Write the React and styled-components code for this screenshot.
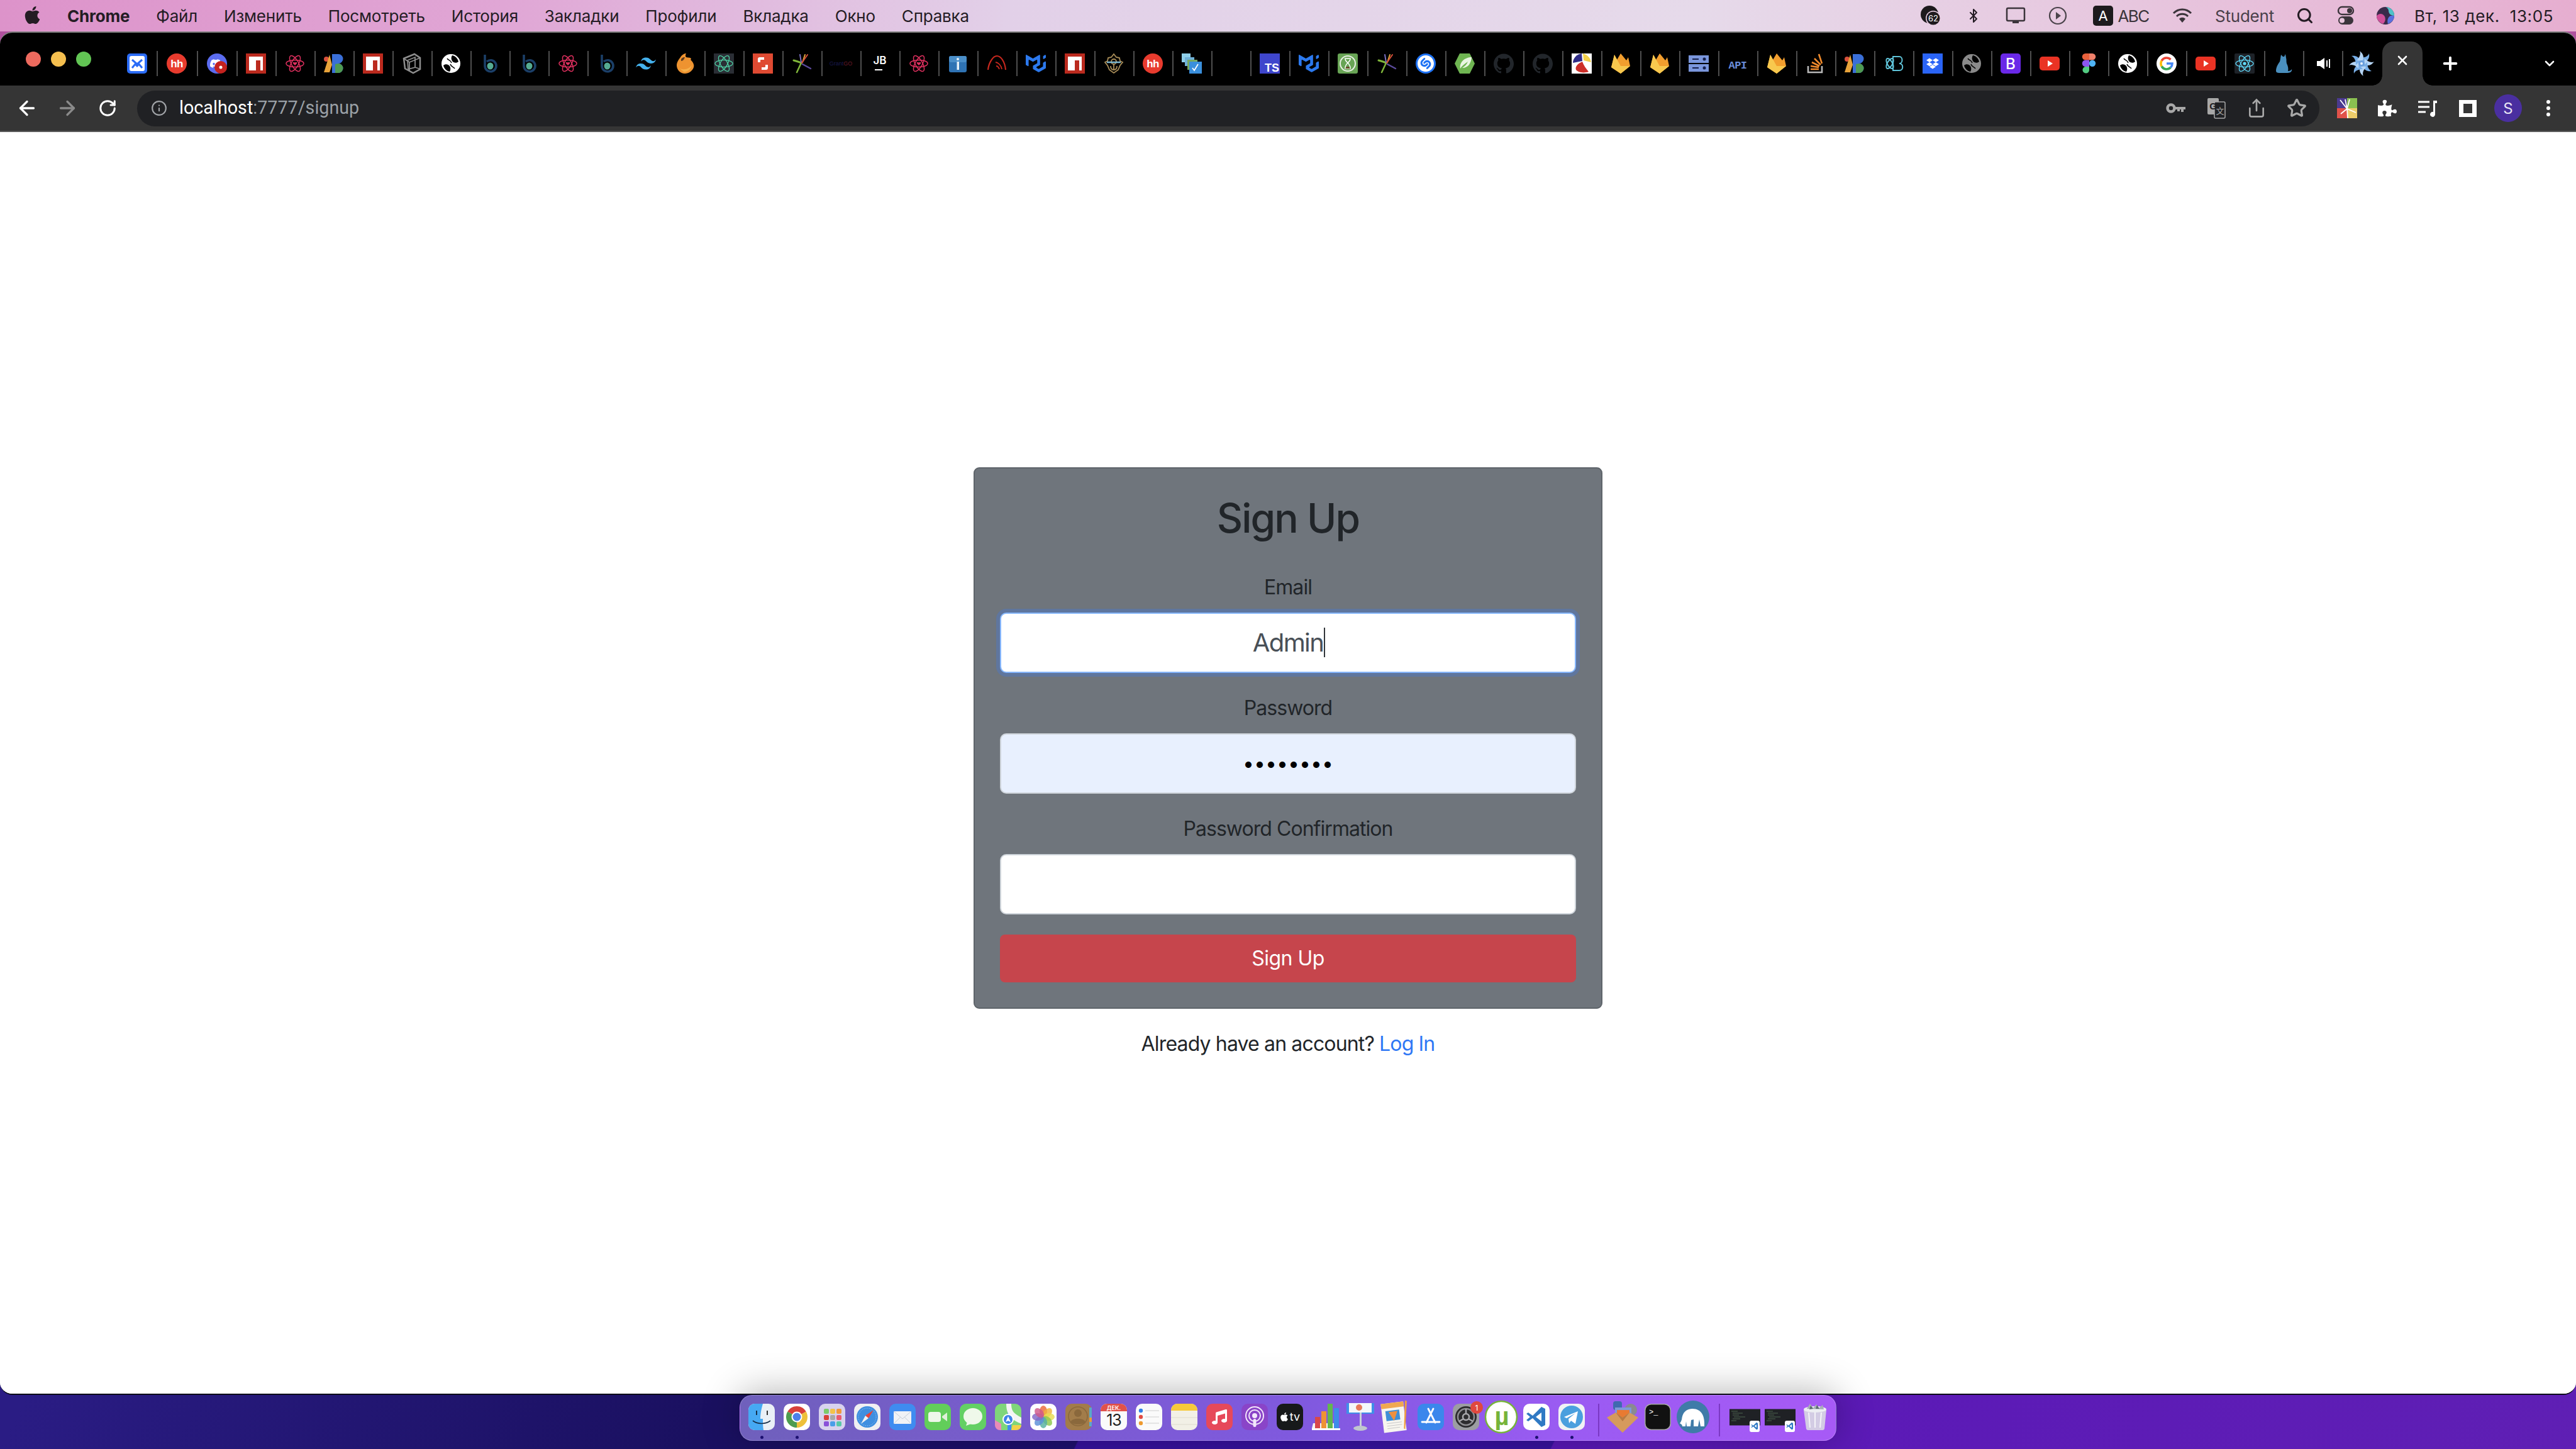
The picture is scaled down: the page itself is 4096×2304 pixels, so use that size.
import React from "react";
import styled, { createGlobalStyle } from "styled-components";
import { ArrowLeft, ArrowRight, RotateCw, Info, Star, Share, X, Plus, ChevronDown, Search, Bluetooth } from "lucide-react";
import { FaApple, FaPuzzlePiece, FaMusic } from "react-icons/fa";
import { SiDiscord, SiTailwindcss, SiMui, SiShazam, SiGithub, SiDropbox } from "react-icons/si";

const SANS = `Inter, "Liberation Sans", "Noto Sans", sans-serif`;

const Global = createGlobalStyle`
  html, body { margin: 0; padding: 0; background: #000; }
  * { box-sizing: border-box; }
  body { font-family: ${SANS}; }
`;

const Desktop = styled.div`
  width: 4096px; height: 2304px; display: flex; flex-direction: column; overflow: hidden;
  background-color: #1c1268;
  background-image:
    linear-gradient(90deg, #b0509e 0, #b0509e 100%),
    linear-gradient(116deg, #2a1c84 1009px, #1a1060 2000px, #1e1070 2544px, #36129e 2546px, #37139f 3225px, #5a18b8 3227px, #5f1fb4 100%);
  background-size: 100% 90px, 100% 100%;
  background-repeat: no-repeat;
`;

/* ---------- menu bar ---------- */
const MenuBar = styled.header`
  height: 50px; flex: none; display: flex; align-items: center; color: #241c24; font-size: 26px;
  padding: 0 36px 0 36px;
  background: linear-gradient(90deg, #dd93ca 0, #e0a6d5 800px, #e2d0e8 1600px, #e6daea 2700px, #e7c6de 3400px, #e6aed0 4096px);
`;
const AppleMark = styled(FaApple)` width: 31px; height: 32px; color: #241c24; margin-right: 40px; margin-top: -3px; flex: none; `;
const MenuItems = styled.nav` display: flex; gap: 42px; flex: 1; `;
const MenuItem = styled.span`
  font-weight: ${p => (p.$bold ? 700 : 400)}; white-space: nowrap; letter-spacing: -0.2px;
`;
const Status = styled.div` display: flex; align-items: center; justify-content: flex-end; `;
const StatusCell = styled.span`
  display: flex; align-items: center; justify-content: center; flex: none; white-space: nowrap;
  width: ${p => p.$w}px; margin-left: ${p => p.$ml || 0}px; color: ${p => p.$c || "#241c24"};
  letter-spacing: ${p => p.$ls || 0}px;
`;

/* ---------- browser window ---------- */
const Window = styled.main`
  flex: 1; display: flex; flex-direction: column; border-radius: 20px; overflow: hidden; min-height: 0;
  border-top: 2px solid #7f7f7f; border-bottom: 2px solid #0c0c18; background: #fff;
`;
const TabStrip = styled.div` height: 84px; flex: none; display: flex; background: #000; `;
const Lights = styled.div` width: 188px; flex: none; display: flex; align-items: center; gap: 16px; padding-left: 41px; `;
const Light = styled.i` width: 24px; height: 24px; border-radius: 50%; background: ${p => p.$c}; `;
const Tab = styled.div`
  width: ${p => p.$w}px; flex: none; height: 40px; align-self: center; margin-top: 14px; display: flex; align-items: center;
  justify-content: center; padding-right: 2px; border-right: 2px solid ${p => (p.$last ? "transparent" : "#4e4e4e")};
`;
const FavSvg = styled.svg` width: 32px; height: 32px; display: block; overflow: visible; `;
const ActiveTab = styled.div`
  width: 64px; height: 70px; align-self: flex-end; flex: none; background: #353535; position: relative;
  border-radius: 18px 18px 0 0; display: flex; align-items: center; justify-content: center; padding-bottom: 10px; color: #fff;
  &::before, &::after { content: ""; position: absolute; bottom: 0; width: 16px; height: 16px; }
  &::before { left: -16px; background: radial-gradient(circle at 0 0, #000 15.5px, #353535 16px); }
  &::after { right: -16px; background: radial-gradient(circle at 100% 0, #000 15.5px, #353535 16px); }
`;
const NewTab = styled.div` color: #fff; margin: 14px 0 0 28px; width: 32px; align-self: center; display: flex; justify-content: center; `;
const TabMenu = styled.div` color: #fff; margin: 14px 30px 0 auto; width: 24px; align-self: center; display: flex; justify-content: center; `;

const Toolbar = styled.div`
  height: 74px; flex: none; display: flex; align-items: center; background: #353535; padding: 0 12px 0 11px;
  border-bottom: 2px solid #5c5c5c;
`;
const ToolButton = styled.span`
  width: 64px; height: 56px; flex: none; display: flex; align-items: center; justify-content: center; color: ${p => p.$c || "#fff"};
`;
const AddressBar = styled.div`
  flex: 1; height: 57px; margin: 0 12px 0 15px; padding: 0 4px 0 22px; border-radius: 29px; background: #202124;
  display: flex; align-items: center; min-width: 0;
`;
const InfoIcon = styled(Info)` color: #a0a3a7; margin-right: 19px; flex: none; `;
const Url = styled.div` flex: 1; font-family: Roboto, ${SANS}; font-size: 28.7px; color: #fff; white-space: nowrap; margin-top: -2px; `;
const UrlRest = styled.span` color: #9aa0a6; `;
const Avatar = styled.span`
  width: 44px; height: 44px; border-radius: 50%; background: #4a2fa0; color: #e9e6f5; font-size: 24px;
  display: flex; align-items: center; justify-content: center;
`;

/* ---------- page ---------- */
const Page = styled.section`
  flex: 1; background: #fff; display: flex; flex-direction: column; align-items: center; justify-content: center;
  font-size: 32px; line-height: 48px; color: #212529;
`;
const Card = styled.form`
  width: 1000px; padding: 40px; background: #6f757c; border: 2px solid #5e646a; border-radius: 9px;
  display: flex; flex-direction: column; text-align: center;
`;
const Title = styled.h2`
  margin: 0 0 48px; font-size: 64px; line-height: 77px; font-weight: 500; letter-spacing: -1.9px; color: #212529;
`;
const Group = styled.div` margin-bottom: 32px; display: flex; flex-direction: column; `;
const Label = styled.label` display: block; margin-bottom: 16px; letter-spacing: -0.95px; color: #212529; `;
const Input = styled.input`
  display: block; width: 100%; height: 96px; border: 2px solid #ced4da; border-radius: 10px; outline: none;
  background: ${p => p.$fill || "#fff"}; color: #000; text-align: center; font: 400 32px ${SANS}; padding: 0 32px;
`;
const FocusedField = styled.div`
  height: 96px; border: 2px solid #86b7fe; border-radius: 10px; background: #fff; box-shadow: 0 0 0 6px #5f769e;
  display: flex; align-items: center; justify-content: center; color: #495057; font-size: 40px; letter-spacing: -1.6px;
`;
const Caret = styled.i` width: 2px; height: 47px; background: #33373b; margin-left: 1px; margin-right: -3px; `;
const Submit = styled.button`
  height: 76px; width: 100%; border: none; border-radius: 8px; background: #c6454c; color: #fff;
  font: 400 32px ${SANS}; letter-spacing: -0.55px;
`;
const Foot = styled.p` margin: 32px 0 0; letter-spacing: -0.85px; color: #212529; `;
const FootLink = styled.a` color: #2f78f5; text-decoration: none; `;

/* ---------- dock ---------- */
const DockRow = styled.footer` height: 86px; flex: none; display: flex; justify-content: center; position: relative; `;
const Dock = styled.nav`
  width: 1744px; height: 73px; padding: 13px 13px 0; display: flex; gap: 14px; border-radius: 20px;
  background: linear-gradient(90deg, #6f60bc 0, #7a5bd0 500px, #8059df 900px, #9a5bf2 1300px, #a75af6 100%);
  border: 1px solid rgba(255,255,255,.22); box-shadow: 0 -4px 60px rgba(0,0,0,.3); position: relative; z-index: 2;
`;
const DockSlot = styled.div`
  width: 42px; height: 42px; flex: none; position: relative; display: flex; align-items: center; justify-content: center;
  &::after {
    content: ""; display: ${p => (p.$open ? "block" : "none")}; position: absolute; left: 19px; top: 51px;
    width: 5px; height: 5px; border-radius: 50%; background: #1c1070;
  }
`;
const DockSvg = styled.svg`
  width: ${p => p.$s || 42}px; height: ${p => p.$s || 42}px; flex: none; display: block; overflow: visible;
`;
const DockSep = styled.i` width: 2px; height: 52px; flex: none; background: #7b38c4; margin: 0 ${p => p.$r}px 0 ${p => p.$l}px; `;

/* ---------- small drawings ---------- */
const Atom = ({ c, w = 1.5, heart, dot }) => (
  <g fill="none" stroke={c} strokeWidth={w}>
    <ellipse cx="16" cy="16" rx="14" ry="5.6" />
    <ellipse cx="16" cy="16" rx="14" ry="5.6" transform="rotate(60 16 16)" />
    <ellipse cx="16" cy="16" rx="14" ry="5.6" transform="rotate(120 16 16)" />
    {heart && <path d="M16 19l-3-3c-1.4-1.8 1.6-3.4 3-1.3 1.4-2.1 4.4-.5 3 1.3z" fill={c} stroke="none" />}
    {dot && <circle cx="16" cy="16" r="2.6" fill={c} stroke="none" />}
  </g>
);
const Npm = () => (<g><rect width="32" height="32" fill="#bb2a1e" /><path d="M5 5h22v22h-4V11h-7v16H5z" fill="#fff" /></g>);
const Hh = () => (<g><circle cx="16" cy="16" r="16" fill="#e83b2e" /><text x="16" y="22" textAnchor="middle" fontSize="17" fontWeight="700" fill="#fff" fontFamily="Liberation Sans" letterSpacing="-.6">hh</text></g>);
const Globe = ({ bg = "#fff", fg = "#000" }) => (<g><circle cx="16" cy="16" r="15" fill={bg} /><path d="M18 3c5 1 9 5 10 10-3 3-8 2-10-1-1.700-3-2-6 0-9zM14 29c-5-1-9-5-10-10 3-3 8-2 10 1 1.700 3 2 6 0 9z" fill={fg} /><path d="M10 8c2 3 6 3 7 7M22 24c-2-3-6-3-7-7" fill="none" stroke={fg} strokeWidth="1.500" /></g>);
const Bubble = () => (<g fill="none"><path d="M8 2v18a9 9 0 1 0 3-7" stroke="#1b3f68" strokeWidth="3.600" /><ellipse cx="16.500" cy="20" rx="5" ry="5.500" fill="#55ab93" /></g>);
const Blocks = () => (<g><circle cx="4" cy="9" r="4" fill="#d9503c" /><path d="M9 2L0 30h9l4-12z" fill="#e8a33a" /><path d="M12 1h10a7 7 0 0 1 0 15 7 7 0 0 1 0 15H12z" fill="#3a6fd8" transform="translate(1 0)" /><path d="M23 16a7.500 7.500 0 0 1 0 15h-5V17z" fill="#4f9a52" /></g>);
const Rays = () => (<g fill="none" strokeWidth="2" strokeLinecap="round"><path d="M8 30L15 15" stroke="#7fb53a" strokeWidth="2.500" /><path d="M3 11c4 1 8 2 12 4" stroke="#7fb53a" strokeWidth="3" /><path d="M13 2l2 12" stroke="#7a6fc0" /><path d="M17 14l4-12" stroke="#e0a43a" /><path d="M16 15l9-13" stroke="#d84f3a" /><path d="M17 17l13 7" stroke="#5b4a9c" strokeWidth="2.500" /></g>);
const Fire = () => (<g><path d="M16 0l9 11 3-5 3 14-15 12L1 22 6 2l4 8z" fill="#f29e2e" /><path d="M6 2l10 18 15 0-15 12L1 22z" fill="#f8c84e" /></g>);
const Yt = () => (<g><rect x="0" y="5" width="32" height="22" rx="5" fill="#ea3324" /><path d="M13 11l8 5-8 5z" fill="#fff" /></g>);
const Gh = () => (<SiGithub x="0" y="0" size={32} color="#22262b" />);
const SWIRL = [0, 45, 90, 135, 180, 225, 270, 315];

const FAV = [
  <g key="0"><rect width="32" height="32" rx="5" fill="#2b6cf6" /><rect x="4" y="4" width="24" height="24" rx="3" fill="#fff" /><path d="M8 10l8 7 8-7M8 23l5-6 3 3 3-3 5 6" fill="none" stroke="#2b6cf6" strokeWidth="3" /></g>,
  <Hh key="1" />,
  <g key="2"><circle cx="16" cy="16" r="16" fill="#5b6cf0" /><SiDiscord x="5" y="7" size={18} color="#fff" /><circle cx="22" cy="22" r="10" fill="#c4221e" /><circle cx="22" cy="22" r="2.500" fill="#fff" /></g>,
  <Npm key="3" />,
  <Atom key="4" c="#e0305f" heart />,
  <Blocks key="5" />,
  <Npm key="6" />,
  <g key="7" fill="none" stroke="#8d8d8d" strokeWidth="2.500"><path d="M3 8L20 1l9 6v18l-11 6-13-7z" /><path d="M3 8l9 6v14M29 7l-17 7M9 11l12-5 0 16-11 3zM21 22l9 3" strokeWidth="1.800" /></g>,
  <Globe key="8" />,
  <Bubble key="9" />,
  <Bubble key="10" />,
  <Atom key="11" c="#e0305f" heart />,
  <Bubble key="12" />,
  <SiTailwindcss key="13" x="0" y="0" size={32} color="#45b2ee" />,
  <g key="14"><path d="M9 6c3-5 7-6 9-6-1 2-2 4 0 6 4 1 6 0 8 2-1 2-1 2 0 3 4 4 5 8 4 11-2 6-8 10-14 10C9 32 3 26 3 19 3 14 6 10 9 6z" fill="#ee9330" /><path d="M10 9c2-3 4-3 6-3-1 3-3 6-6 6z" fill="#5a3a20" /><path d="M8 24c8 3 16 0 19-6-1 7-7 12-13 11z" fill="#f6b04a" /></g>,
  <g key="15"><rect width="32" height="32" fill="#2a2e35" /><Atom c="#4fd1a5" w="1.300" /></g>,
  <g key="16"><rect width="32" height="32" fill="#df4a32" /><path d="M8 14V9a3 3 0 0 1 3-3h7v4h-5a1 1 0 0 0-1 1v3zM24 18v5a3 3 0 0 1-3 3h-7v-4h5a1 1 0 0 0 1-1v-3z" fill="#fff" /></g>,
  <Rays key="17" />,
  <text key="18" x="16" y="19" textAnchor="middle" fontSize="9" fill="#1a1a50" fontFamily="Liberation Sans">Grant<tspan fill="#6a1a2a">GO</tspan></text>,
  <g key="19"><text x="16" y="17" textAnchor="middle" fontSize="17" fontWeight="600" fill="#fff" fontFamily="Inter">JB</text><rect x="8" y="25" width="12" height="2" fill="#fff" /></g>,
  <Atom key="20" c="#e0305f" heart />,
  <g key="21"><rect x="2" y="4" width="28" height="26" rx="3" fill="#2f73b4" /><rect x="2" y="4" width="28" height="10" rx="3" fill="#4b8fc9" /><rect x="14.500" y="13" width="3.500" height="13" fill="#e6f0f8" /><circle cx="16" cy="9" r="2" fill="#e6f0f8" /></g>,
  <g key="22" fill="none" stroke="#c8281e" strokeWidth="2.200"><path d="M2 26C3 15 10 4 16 4c7 0 13 10 14 22" /><path d="M14 14c4 0 9 5 10 11M15 20c2 0 4 2 5 5" strokeWidth="1.800" /></g>,
  <SiMui key="23" x="0" y="0" size={32} color="#2c79ee" />,
  <Npm key="24" />,
  <g key="25" fill="none" stroke="#a98d58" strokeWidth="1.800"><path d="M16 1l4 5 5 1 1 5 4 2-4 5-3 7-7 5-7-5-3-7-4-5 4-2 1-5 5-1z" /><circle cx="16" cy="13" r="4" /><path d="M16 16v10M11 20c0 4 2 6 5 6s5-2 5-6" /><path d="M5 14h22" stroke="#7fb8d0" strokeWidth="2.500" /></g>,
  <Hh key="26" />,
  <g key="27"><rect x="0" y="0" width="14" height="14" fill="#8fd0ea" /><rect x="5" y="6" width="15" height="14" fill="#6fb0d8" /><rect x="9" y="10" width="16" height="16" fill="#77a860" /><rect x="12" y="13" width="20" height="19" fill="#3a8fdc" /><path d="M17 23l3 4 6-10" fill="none" stroke="#fff" strokeWidth="1.800" /></g>,
  null,
  <g key="29"><rect width="32" height="32" fill="#3f46cc" /><text x="31" y="29" textAnchor="end" fontSize="18" fontWeight="700" fill="#fff" fontFamily="Liberation Sans">TS</text></g>,
  <SiMui key="30" x="0" y="0" size={32} color="#2c79ee" />,
  <g key="31"><rect width="32" height="32" rx="3" fill="#68a455" /><circle cx="16" cy="16" r="12" fill="none" stroke="#e8efe4" strokeWidth="2" /><path d="M11 8h10M11 24h10M12 9c0 5 8 6 8 14M20 9c0 5-8 6-8 14" fill="none" stroke="#fff" strokeWidth="1.500" /><path d="M14 21h4l2 3h-8z" fill="#6a4a2a" /></g>,
  <Rays key="32" />,
  <g key="33"><circle cx="16" cy="16" r="16" fill="#1f73f5" /><SiShazam x="3" y="3" size={26} color="#fff" /></g>,
  <g key="34"><path d="M8 0h16l8 16-8 16H8L0 16z" fill="#6fb552" /><path d="M9 24C7 14 16 6 27 6c-1 9-5 17-15 17 3-2 7-5 9-10-4 3-9 6-12 11z" fill="#e9f5e3" /></g>,
  <Gh key="35" />,
  <Gh key="36" />,
  <g key="37"><rect width="32" height="32" fill="#fff" /><path d="M16 0C8 1 2 8 2 15l15-3z" fill="#2f2c86" /><path d="M18 0c7 2 12 7 13 14l-12-3z" fill="#f2d04a" /><path d="M17 13C10 16 5 21 7 26c3 4 12 6 20 3-4-5-8-10-10-16z" fill="#cc2e28" /></g>,
  <Fire key="38" />,
  <Fire key="39" />,
  <g key="40" fill="#7a96dc"><rect y="3" width="32" height="12" /><rect y="17" width="32" height="12" /><g fill="#16204a"><rect x="6" y="8" width="10" height="2" /><circle cx="25" cy="9" r="2.500" /><rect x="6" y="22" width="10" height="2" /><circle cx="25" cy="23" r="2.500" /></g></g>,
  <text key="41" x="16" y="24" textAnchor="middle" fontSize="17" fill="#6a8cd8" fontFamily="Liberation Mono" fontWeight="700" letterSpacing="-.5">API</text>,
  <Fire key="42" />,
  <g key="43" fill="none"><path d="M4 20v10h22V20" stroke="#b8b8b8" strokeWidth="2.600" /><path d="M8 25h13M8 20l13 2M10 14l12 6M14 8l10 10M21 1l5 15" stroke="#ef8a2c" strokeWidth="2.600" /></g>,
  <Blocks key="44" />,
  <g key="45" fill="none" stroke="#5fc3d8" strokeWidth="2"><ellipse cx="10" cy="16" rx="9" ry="4" transform="rotate(60 10 16)" /><ellipse cx="10" cy="16" rx="9" ry="4" transform="rotate(-60 10 16)" /><path d="M15 5h10c6 0 6 11 0 11 7 0 7 11 0 11H15z" /></g>,
  <g key="46"><rect width="32" height="32" fill="#2a64f6" /><SiDropbox x="6" y="6" size={20} color="#fff" /></g>,
  <Globe key="47" bg="#8a8a8a" fg="#000" />,
  <g key="48"><rect width="32" height="32" rx="5" fill="#6a28e8" /><text x="16" y="25" textAnchor="middle" fontSize="24" fontWeight="500" fill="#fff" fontFamily="Inter">B</text></g>,
  <Yt key="49" />,
  <g key="50"><path d="M10 0h6v10.500h-6a5.250 5.250 0 0 1 0-10.500z" fill="#e8613c" transform="translate(1 0)" /><path d="M17 0h5a5.250 5.250 0 0 1 0 10.500h-5z" fill="#f0806a" /><path d="M11 10.500h6V21h-6a5.250 5.250 0 0 1 0-10.500z" fill="#8d55f0" /><circle cx="22" cy="15.700" r="5.200" fill="#4fb4f5" /><path d="M11 21h6v5.700a5.300 5.300 0 1 1-6-5.700z" fill="#52cc82" /></g>,
  <Globe key="51" />,
  <g key="52"><circle cx="16" cy="16" r="16" fill="#fff" /><g fill="none" strokeWidth="3.600"><path d="M8.200 11.500A9 9 0 0 1 22.400 9.700" stroke="#ea4335" /><path d="M8.200 11.500a9 9 0 0 0 0 9" stroke="#fbbc05" /><path d="M8.200 20.500A9 9 0 0 0 22.400 22.300" stroke="#34a853" /><path d="M16 16h9A9 9 0 0 1 22.400 22.300" stroke="#4285f4" /></g></g>,
  <Yt key="53" />,
  <g key="54"><rect width="32" height="32" rx="2" fill="#1e2228" /><Atom c="#61dafb" w="1.300" dot /></g>,
  <path key="55" d="M12 2l3 3h2l2-4 1 6c1 3 0 6 1 9 2 4 3 8 2 12 3 0 5-1 6-3 1 3-2 6-7 6H9c-3 0-5-1-5-3 0-6 3-11 6-15 1-3 1-7 2-11z" fill="#4a8fbe" />,
  <g key="56" fill="#fff"><path d="M7 12h5l7-5v18l-7-5H7z" /><rect x="22" y="11" width="2" height="10" /><rect x="26" y="9" width="2" height="14" /></g>,
  <g key="57"><circle cx="16" cy="16" r="10" fill="#8fbdea" />{SWIRL.map(a => <path key={a} d="M14 7C20 7 26 5 28 0c1 6-1 12-8 14z" fill={a % 90 ? "#b4d4f4" : "#78aee6"} transform={`rotate(${a} 16 16)`} />)}<circle cx="16" cy="16" r="5" fill="#6a9fdc" /><circle cx="16" cy="16" r="2" fill="#e8f2ff" /></g>,
];

const Squircle = ({ fill, ...rest }) => <rect x="0" y="0" width="42" height="42" rx="10" fill={fill} {...rest} />;
const Chrome = () => (<g><path d="M21 21L6.300 12.500A17 17 0 0 1 35.700 12.500z" fill="#d8403a" /><path d="M21 21L35.700 12.500A17 17 0 0 1 21 38z" fill="#eec03a" /><path d="M21 21L21 38A17 17 0 0 1 6.300 12.500z" fill="#4d9c50" /><circle cx="21" cy="21" r="8.500" fill="#fff" /><circle cx="21" cy="21" r="6.500" fill="#4b80ea" /></g>);
const VSC_PATH = "M29 5L15 19l-7-5-3 2 6 5-6 5 3 2 7-5 14 14 6-3V8zM29 14v14l-9-7z";
const Vsc = () => (<g><Squircle fill="#fff" /><path d={VSC_PATH} fill="#2f79c4" fillRule="evenodd" /></g>);
const Thumb = () => (<g><rect x="0" y="11.500" width="49" height="26" fill="#1f2125" /><path d="M3 15h10M5 18h16M5 21h10M7 24h18M5 27h12M3 30h8" stroke="#5c7a5a" strokeWidth=".8" /><rect x="32" y="30" width="16" height="18" rx="3" fill="#fff" /><g transform="translate(32.500 31) scale(.36)"><path d={VSC_PATH} fill="#2f79c4" fillRule="evenodd" /></g></g>);

const PHOTO_COLORS = ["#eb6a3a", "#f0b23c", "#e8dc50", "#8cc84e", "#55b0a0", "#5a8fd8", "#8268c8", "#d0588a"];
const LAUNCH = ["#7cc96c", "#f2c34a", "#f09a3c", "#d8403a", "#a8a8a8", "#ea5a70", "#8a50d8", "#4a9ee8", "#58c8a8"];

const DOCK = [
  { key: "finder", open: true, art: <g><Squircle fill="#eaf0f6" /><path d="M10 0h13c-3 10-4 18-4 24h4c0 6 0 12 1 18H10A10 10 0 0 1 0 32V10A10 10 0 0 1 10 0z" fill="#46a9f3" /><rect x="12" y="11" width="2" height="7" fill="#15304a" /><rect x="29" y="11" width="2" height="7" fill="#333" /><path d="M7 27c8 6 20 6 28 0" fill="none" stroke="#15304a" strokeWidth="1.600" /></g> },
  { key: "chrome", open: true, art: <g><Squircle fill="#fff" /><Chrome /></g> },
  { key: "launch", art: <g><Squircle fill="#d8d2ee" />{LAUNCH.map((c, i) => <rect key={c} x={8 + (i % 3) * 10} y={8 + Math.floor(i / 3) * 10} width="8" height="8" rx="2" fill={c} />)}</g> },
  { key: "safari", art: <g><Squircle fill="#f0f0f2" /><circle cx="21" cy="21" r="17" fill="#3f8fe0" /><circle cx="21" cy="21" r="14" fill="none" stroke="#bcd8f5" strokeDasharray="1 2" /><path d="M31 10L18 19l5 4z" fill="#e8443a" /><path d="M11 32l7-13 5 4z" fill="#f2f2f2" /></g> },
  { key: "mail", art: <g><Squircle fill="#3f8cf0" /><rect x="7" y="12" width="28" height="20" rx="1.500" fill="#f0f2f6" /><path d="M7 12l14 12 14-12M7 32l11-11M35 32L24 21" fill="none" stroke="#c6ced8" strokeWidth="1" /></g> },
  { key: "facetime", art: <g><Squircle fill="#62ce5a" /><rect x="6" y="13" width="20" height="16" rx="4" fill="#eef7ea" /><path d="M28 20l8-6v14l-8-6z" fill="#dff0d8" /></g> },
  { key: "messages", art: <g><Squircle fill="#63d064" /><ellipse cx="21" cy="20" rx="15" ry="13" fill="#eff8ea" /><path d="M12 29l-2 6 8-3z" fill="#eff8ea" /></g> },
  { key: "maps", art: <g><Squircle fill="#7fd67a" /><path d="M20 0h6v42h-6z" fill="#3f8cf0" /><path d="M26 0c0 14 6 16 16 22v10C28 26 18 20 18 0z" fill="#f4f4f4" /><path d="M0 26l10 6v10H8a8 8 0 0 1-8-8z" fill="#ea8ab8" /><path d="M28 34l14 0v0a8 8 0 0 1-8 8h-8z" fill="#f2cf4a" /><circle cx="21" cy="25" r="9" fill="#fff" /><circle cx="21" cy="25" r="7" fill="#3f82e8" /><path d="M21 20l4 9-4-2-4 2z" fill="#fff" /></g> },
  { key: "photos", art: <g><Squircle fill="#fff" />{PHOTO_COLORS.map((c, i) => <ellipse key={c} cx="21" cy="12" rx="6" ry="9" fill={c} opacity=".82" transform={`rotate(${i * 45} 21 21)`} />)}</g> },
  { key: "contacts", art: <g><Squircle fill="#a27c4a" /><rect x="38" y="6" width="4" height="30" fill="#5aa8c8" /><rect x="38" y="22" width="4" height="7" fill="#e89a3a" /><circle cx="20" cy="20" r="15" fill="none" stroke="#8a683c" strokeWidth="1.500" /><circle cx="20" cy="15" r="6" fill="#8a683c" /><path d="M8 29c3-7 21-7 24 0-4 5-20 5-24 0z" fill="#8a683c" /></g> },
  { key: "calendar", art: <g><Squircle fill="#fafafa" /><path d="M10 0h22a10 10 0 0 1 10 10v2H0v-2A10 10 0 0 1 10 0z" fill="#e0524a" /><text x="21" y="9.500" textAnchor="middle" fontSize="9" fontWeight="600" fill="#fff" fontFamily="Inter">ДЕК.</text><text x="21" y="35" textAnchor="middle" fontSize="25" fill="#222" fontFamily="Inter" letterSpacing="-1">13</text></g> },
  { key: "reminders", art: <g><Squircle fill="#fafafa" /><circle cx="8" cy="11" r="3.200" fill="#2f7fe8" /><circle cx="8" cy="21" r="3.200" fill="#e04a42" /><circle cx="8" cy="31" r="3.200" fill="#ee9a30" /><path d="M15 11h22M15 21h22M15 31h22" stroke="#cfcfcf" /></g> },
  { key: "notes", art: <g><Squircle fill="#f2f0e6" /><path d="M10 0h22a10 10 0 0 1 10 10v1H0v-1A10 10 0 0 1 10 0z" fill="#f6c93a" /><path d="M0 22h42M0 33h42" stroke="#dedbcf" /></g> },
  { key: "music", art: <g><Squircle fill="#e6495a" /><FaMusic x="9" y="9" size={24} color="#fff" /></g> },
  { key: "podcasts", art: <g><Squircle fill="#8a44c8" /><g fill="none" stroke="#f3e6fb" strokeWidth="2"><circle cx="21" cy="19" r="14" /><circle cx="21" cy="19" r="9" /></g><circle cx="21" cy="19" r="4" fill="#f3e6fb" /><rect x="18.500" y="24" width="5" height="13" rx="2.500" fill="#f3e6fb" /></g> },
  { key: "tv", art: <g><Squircle fill="#17191a" /><FaApple x="4" y="13" size={16} color="#fff" /><text x="29" y="27" textAnchor="middle" fontSize="18" fill="#fff" fontFamily="Inter">tv</text></g> },
  { key: "numbers", art: <g><path d="M0 39h42l-2-8H2z" fill="#f4f4f4" /><rect y="39" width="45" height="3" fill="#fff" /><rect x="5" y="21" width="8" height="18" fill="#d8484a" /><rect x="15" y="12" width="8" height="27" fill="#ee9334" /><rect x="25" y="0" width="8" height="39" fill="#62b84c" /><rect x="35" y="7" width="8" height="32" fill="#3f8ce8" /></g> },
  { key: "keynote", art: <g><rect x="-1" y="-1" width="44" height="17" fill="#3f8fe8" /><rect x="3" y="-1" width="36" height="15" fill="#f5f7fa" /><circle cx="19" cy="6" r="5" fill="#e87a5a" /><rect x="20" y="14" width="3" height="24" fill="#c8d0d8" /><ellipse cx="21" cy="39" rx="11" ry="4" fill="#c0c6ce" /></g> },
  { key: "pages", art: <g transform="rotate(-7 21 21)"><rect x="0" y="-2" width="36" height="46" fill="#f7f5ef" /><rect x="0" y="-2" width="36" height="8" fill="#f0a850" /><rect x="6" y="10" width="22" height="16" fill="#3f8fd8" /><path d="M11 12h14l-7 15z" fill="#ee9040" /><path d="M6 30h24M6 34h24M6 38h20" stroke="#c8c8c8" /><path d="M39 -3l3 1-8 44-2-1z" fill="#f0a040" /></g> },
  { key: "store", art: <g><Squircle fill="#3b87ec" /><path d="M25 8L14 30M17 8l11 22M7 29h28" stroke="#fff" strokeWidth="2.800" fill="none" strokeLinecap="round" /></g> },
  { key: "settings", art: <g><Squircle fill="#9c9ea2" /><circle cx="21" cy="21" r="17" fill="#2c2c2e" /><circle cx="21" cy="21" r="13" fill="none" stroke="#8c8c90" strokeWidth="2.500" /><circle cx="21" cy="21" r="5" fill="none" stroke="#a8a8ac" strokeWidth="2.500" /><path d="M21 8v8M10 28l7-4M32 28l-7-4" stroke="#a8a8ac" strokeWidth="2.500" /><circle cx="38" cy="6" r="10" fill="#e0483e" /><text x="38" y="10.500" textAnchor="middle" fontSize="12" fill="#fff" fontFamily="Inter">1</text></g> },
  { key: "torrent", s: 52, view: "0 0 52 52", art: <g><circle cx="26" cy="26" r="25" fill="#fff" stroke="#76b43a" strokeWidth="2.500" /><text x="27" y="39" textAnchor="middle" fontSize="40" fontWeight="800" fill="#76b43a" fontFamily="Liberation Sans">µ</text></g> },
  { key: "vscode", open: true, art: <Vsc /> },
  { key: "telegram", open: true, art: <g><Squircle fill="#f0f2f4" /><circle cx="21" cy="21" r="18" fill="#4a9fde" /><path d="M9 21l22-9-4 20-7-5-3 4-1-7 11-9-14 8z" fill="#fff" /></g> },
  { sep: [7, 2] },
  { key: "xampp", s: 50, view: "0 0 50 50", art: <g><circle cx="38" cy="14" r="10" fill="#8a8a90" /><rect x="10" y="0" width="14" height="14" rx="4" fill="#3f6ab0" /><rect x="13" y="10" width="26" height="26" fill="#7f9ad8" /><rect x="16" y="14" width="20" height="20" fill="#e87a32" /><path d="M0 26l14-8 11 8 11-8 14 8-25 24z" fill="#d69a5c" /><path d="M14 18l11 8 11-8-11 14z" fill="#b87a42" /></g> },
  { key: "terminal", art: <g><Squircle fill="#a8a8a8" /><rect x="1.500" y="1.500" width="39" height="39" rx="9" fill="#111" /><text x="7" y="17" fontSize="12" fill="#fff" fontFamily="Liberation Mono">&gt;_</text></g> },
  { key: "mamp", s: 52, view: "0 0 52 52", art: <g><circle cx="26" cy="26" r="26" fill="#3f7ba8" /><path d="M9 41c-3-14 1-28 16-28s20 12 19 28h-6l-2-11-2 11h-7V30l-4 1-1 10h-6l-1-8-1 8zM5 36c2-2 3-6 4-9v12z" fill="#fff" /></g> },
  { sep: [6, 4] },
  { key: "win1", s: 49, view: "0 0 49 49", art: <Thumb /> },
  { key: "win2", s: 49, view: "0 0 49 49", art: <Thumb /> },
  { key: "trash", art: <g><path d="M3 10h36l-3 30a3 3 0 0 1-3 2H10a3 3 0 0 1-3-2z" fill="#d8d8e2" opacity=".9" /><path d="M11 14l2 24M21 14v24M31 14l-2 24" stroke="#f4f4f8" strokeWidth="2" /><ellipse cx="21" cy="9" rx="18" ry="5" fill="#eceef2" /><path d="M8 8l5-8 5 7 5-6 4 6 6-5 2 7z" fill="#a8b0b8" /><path d="M14 3l4 5-6 1zM24 2l4 6-6 0z" fill="#5c6a70" /></g> },
];

const TOOL_SIZE = 36;
const tabWidth = i => (i === 1 ? 64 : i === 0 || i === 2 ? 63 : 62);

export default function App() {
  return (
    <Desktop>
      <Global />
      <MenuBar>
        <AppleMark />
        <MenuItems>
          <MenuItem $bold>Chrome</MenuItem>
          {["Файл", "Изменить", "Посмотреть", "История", "Закладки", "Профили", "Вкладка", "Окно", "Справка"].map(t => <MenuItem key={t}>{t}</MenuItem>)}
        </MenuItems>
        <Status>
          <StatusCell $w={42}>
            <FavSvg viewBox="0 0 32 32"><circle cx="14" cy="14" r="14" fill="#1d1a1d" /><circle cx="20" cy="20" r="12" fill="#e8cfe3" /><circle cx="20" cy="20" r="10.500" fill="#1d1a1d" /><text x="20" y="25" textAnchor="middle" fontSize="13" fill="#fff" fontFamily="Inter">62</text></FavSvg>
          </StatusCell>
          <StatusCell $w={24} $ml={35}><Bluetooth size={30} strokeWidth={2} /></StatusCell>
          <StatusCell $w={34} $ml={38}>
            <FavSvg viewBox="0 0 32 32"><rect x="2" y="4" width="28" height="20" rx="2" fill="none" stroke="#3b343b" strokeWidth="2.500" /><rect x="11" y="24" width="10" height="4" fill="#3b343b" /></FavSvg>
          </StatusCell>
          <StatusCell $w={28} $ml={36}>
            <FavSvg viewBox="0 0 32 32"><circle cx="16" cy="16" r="13" fill="none" stroke="#4a434a" strokeWidth="2.200" /><path d="M13 10l8 6-8 6z" fill="#4a434a" /></FavSvg>
          </StatusCell>
          <StatusCell $w={31} $ml={42}>
            <FavSvg viewBox="0 0 32 32"><rect x="0" y="0" width="32" height="32" rx="5" fill="#1d1a1d" /><text x="16" y="24" textAnchor="middle" fontSize="22" fill="#fff" fontFamily="Inter">A</text></FavSvg>
          </StatusCell>
          <StatusCell $w={48} $ml={9} $c="#3b343b" $ls={-1.6}><span>ABC</span></StatusCell>
          <StatusCell $w={32} $ml={38}>
            <FavSvg viewBox="0 0 32 32"><g fill="none" stroke="#3b343b" strokeWidth="3"><path d="M2 12c8-8 20-8 28 0" /><path d="M7 17c5-5 13-5 18 0" /></g><path d="M11 21c3-3 7-3 10 0l-5 6z" fill="#3b343b" /></FavSvg>
          </StatusCell>
          <StatusCell $w={96} $ml={35} $c="#4a404a" $ls={-0.2}><span>Student</span></StatusCell>
          <StatusCell $w={28} $ml={34}><Search size={28} strokeWidth={2.600} /></StatusCell>
          <StatusCell $w={30} $ml={36}>
            <FavSvg viewBox="0 0 32 32"><rect x="4" y="2" width="24" height="12" rx="6" fill="none" stroke="#3b343b" strokeWidth="2.400" /><circle cx="22" cy="8" r="4" fill="#3b343b" /><rect x="4" y="17" width="24" height="13" rx="6.500" fill="#3b343b" /><circle cx="10" cy="23.500" r="4" fill="#e8c6dc" /></FavSvg>
          </StatusCell>
          <StatusCell $w={28} $ml={34}>
            <FavSvg viewBox="0 0 32 32"><circle cx="16" cy="16" r="14" fill="#3a2a4a" /><path d="M16 2a14 14 0 0 1 14 14c-5 0-9-3-9-8 0-2-2-5-5-6z" fill="#4fc2c8" /><path d="M2 16c4-4 9-4 12 0s2 10-2 13C6 27 2 22 2 16z" fill="#d0509a" /><path d="M30 16c0 6-4 11-10 13-2-5 0-11 4-13z" fill="#5a70e0" /></FavSvg>
          </StatusCell>
          <StatusCell $w={221} $ml={32} $ls={0.6}><span>Вт, 13 дек.&nbsp;&nbsp;13:05</span></StatusCell>
        </Status>
      </MenuBar>

      <Window>
        <TabStrip>
          <Lights>
            <Light $c="#ed6a5e" />
            <Light $c="#f5bf4f" />
            <Light $c="#62c554" />
          </Lights>
          {FAV.map((art, i) => (
            <Tab key={i} $w={tabWidth(i)} $last={i === FAV.length - 1}><FavSvg viewBox="0 0 32 32">{art}</FavSvg></Tab>
          ))}
          <ActiveTab><X size={24} strokeWidth={2.600} /></ActiveTab>
          <NewTab><Plus size={32} strokeWidth={3} /></NewTab>
          <TabMenu><ChevronDown size={26} strokeWidth={2.600} /></TabMenu>
        </TabStrip>

        <Toolbar>
          <ToolButton><ArrowLeft size={TOOL_SIZE} strokeWidth={2.200} /></ToolButton>
          <ToolButton $c="#8a8a8a"><ArrowRight size={TOOL_SIZE} strokeWidth={2.200} /></ToolButton>
          <ToolButton><RotateCw size={30} strokeWidth={2.400} /></ToolButton>
          <AddressBar>
            <InfoIcon size={26} strokeWidth={2} />
            <Url>localhost<UrlRest>:7777/signup</UrlRest></Url>
            <ToolButton $c="#a8a8a8">
              <FavSvg viewBox="0 0 32 32"><circle cx="8" cy="16" r="5.500" fill="none" stroke="#a8a8a8" strokeWidth="4.500" /><path d="M13 14h18v4h-3v4h-4v-4h-2v3h-4v-3h-5z" fill="#a8a8a8" /></FavSvg>
            </ToolButton>
            <ToolButton $c="#a8a8a8">
              <FavSvg viewBox="0 0 32 32"><rect x="2" y="0" width="18" height="26" rx="2" fill="#a8a8a8" /><rect x="13" y="6" width="17" height="26" rx="2" fill="#202124" stroke="#a8a8a8" strokeWidth="1.500" /><text x="11" y="18" textAnchor="middle" fontSize="15" fontWeight="700" fill="#202124" fontFamily="Liberation Sans">G</text><text x="22" y="25" textAnchor="middle" fontSize="13" fill="#a8a8a8" fontFamily="Noto Sans CJK SC">文</text></FavSvg>
            </ToolButton>
            <ToolButton $c="#a8a8a8"><Share size={32} strokeWidth={2} /></ToolButton>
            <ToolButton $c="#a8a8a8"><Star size={32} strokeWidth={2.400} /></ToolButton>
          </AddressBar>
          <ToolButton>
            <FavSvg viewBox="0 0 32 32"><rect width="16" height="16" fill="#4b3a90" /><rect x="16" width="16" height="16" fill="#8ac050" /><rect y="16" width="16" height="16" fill="#e0524a" /><rect x="16" y="16" width="16" height="16" fill="#eccc6a" /><path d="M16 17L5 3M16 17L13 2M16 17l4-15M16 17l-10 8M16 17l14 6M16 17l1 15" stroke="#fff" strokeWidth="1.800" /></FavSvg>
          </ToolButton>
          <ToolButton><FaPuzzlePiece size={30} /></ToolButton>
          <ToolButton>
            <FavSvg viewBox="0 0 32 32"><path d="M1 6h18M1 14h18M1 22h12" stroke="#fff" strokeWidth="3" /><path d="M25 4h6v4h-3v18a4 4 0 1 1-3-4z" fill="#fff" /></FavSvg>
          </ToolButton>
          <ToolButton>
            <FavSvg viewBox="0 0 32 32"><path d="M2 3h28v27H2zM9 9v15h14V9z" fill="#fff" fillRule="evenodd" /></FavSvg>
          </ToolButton>
          <ToolButton><Avatar>S</Avatar></ToolButton>
          <ToolButton>
            <FavSvg viewBox="0 0 32 32"><circle cx="16" cy="6" r="3" fill="#fff" /><circle cx="16" cy="16" r="3" fill="#fff" /><circle cx="16" cy="26" r="3" fill="#fff" /></FavSvg>
          </ToolButton>
        </Toolbar>

        <Page>
          <Card onSubmit={e => e.preventDefault()}>
            <Title>Sign Up</Title>
            <Group>
              <Label>Email</Label>
              <FocusedField>Admin<Caret /></FocusedField>
            </Group>
            <Group>
              <Label>Password</Label>
              <Input type="password" readOnly value="12345678" $fill="#e8f0fe" />
            </Group>
            <Group>
              <Label>Password Confirmation</Label>
              <Input type="password" readOnly value="" />
            </Group>
            <Submit type="submit">Sign Up</Submit>
          </Card>
          <Foot>Already have an account? <FootLink href="#login">Log In</FootLink></Foot>
        </Page>
      </Window>

      <DockRow>
        <Dock>
          {DOCK.map((d, i) => d.sep
            ? <DockSep key={i} $l={d.sep[0]} $r={d.sep[1]} />
            : (
              <DockSlot key={d.key} $open={d.open}>
                <DockSvg $s={d.s} viewBox={d.view || "0 0 42 42"}>{d.art}</DockSvg>
              </DockSlot>
            ))}
        </Dock>
      </DockRow>
    </Desktop>
  );
}
